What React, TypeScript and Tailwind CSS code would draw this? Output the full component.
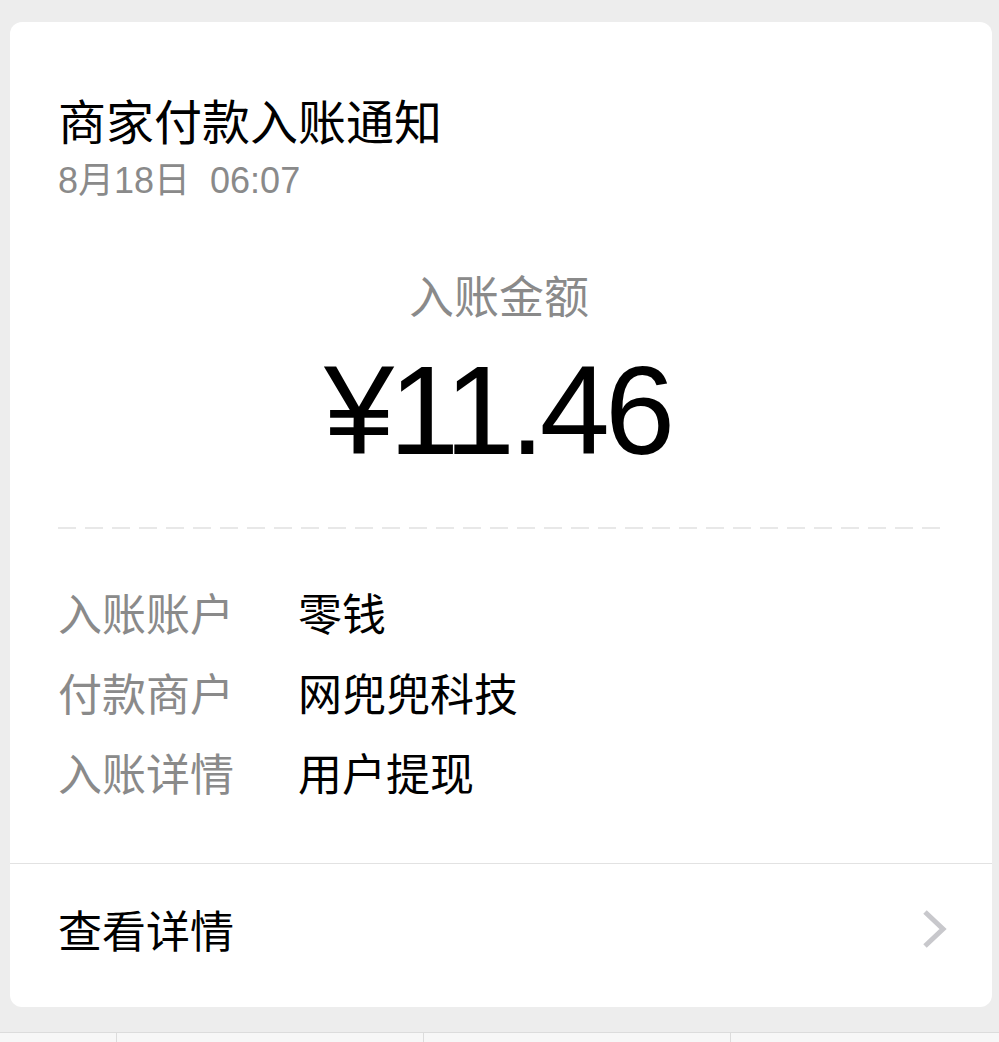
import React from "react";

const font = { fontFamily: '"Liberation Sans", "Noto Sans CJK SC", sans-serif' };

export default function App() {
  const rows: [string, string][] = [
    ["入账账户", "零钱"],
    ["付款商户", "网兜兜科技"],
    ["入账详情", "用户提现"],
  ];
  return (
    <div
      className="w-[999px] h-[1042px] bg-[#ededed] flex flex-col overflow-hidden"
      style={font}
    >
      <div className="mt-[22px] ml-[10px] mr-[7px] h-[985px] bg-white rounded-[12px] flex flex-col">
        <div className="pl-[48px] pr-[52px] pt-[73px] flex flex-col">
          <div className="text-[48px] leading-[48px] text-black font-['Noto_Sans_CJK_SC']">
            商家付款入账通知
          </div>
          <div className="mt-[18px] text-[36px] leading-[40px] text-[#8a8a8a] whitespace-pre">
            8月18日  06:07
          </div>
          <div className="mt-[70px] text-[45px] leading-[48px] text-[#8a8a8a] text-center font-['Noto_Sans_CJK_SC']">
            入账金额
          </div>
          <div className="mt-[27px] text-[126px] leading-[130px] text-black text-center tracking-[-5px] pr-[4px]">
            ¥11.46
          </div>
          <div className="mt-[51px] h-[2px] bg-[repeating-linear-gradient(to_right,#e8e8e8_0,#e8e8e8_18px,transparent_18px,transparent_27px)]" />
          <div className="mt-[43px] flex flex-col">
            {rows.map(([k, v]) => (
              <div key={k} className="flex h-[80px] items-center text-[44px] font-['Noto_Sans_CJK_SC']">
                <div className="w-[240px] text-[#8a8a8a]">{k}</div>
                <div className="text-black">{v}</div>
              </div>
            ))}
          </div>
        </div>
        <div className="mt-[51px] h-[1px] bg-[#e2e2e2]" />
        <div className="flex-1 flex items-center justify-between pl-[48px] pr-[44px] pb-[13px]">
          <div className="text-[44px] text-black font-['Noto_Sans_CJK_SC'] leading-[48px]">查看详情</div>
          <svg width="26" height="40" viewBox="0 0 26 40">
            <polyline
              points="3,3 21,20 3,37"
              fill="none"
              stroke="#c8c8cc"
              strokeWidth="5"
              strokeLinejoin="miter"
            />
          </svg>
        </div>
      </div>
      <div className="mt-[25px] h-[1px] bg-[#dcdcdc]" />
      <div className="flex-1 flex bg-[#f7f7f7]">
        <div className="w-[117px] border-r border-[#dcdcdc]" />
        <div className="w-[307px] border-r border-[#dcdcdc]" />
        <div className="w-[307px] border-r border-[#dcdcdc]" />
        <div className="flex-1" />
      </div>
    </div>
  );
}
